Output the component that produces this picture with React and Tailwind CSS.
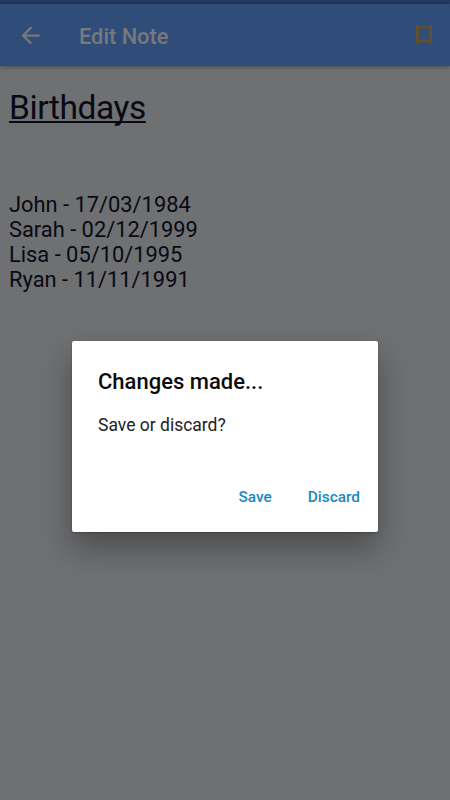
import React from 'react';
import { MdArrowBack } from 'react-icons/md';

const note = {
  title: 'Birthdays',
  lines: ['John - 17/03/1984', 'Sarah - 02/12/1999', 'Lisa - 05/10/1995', 'Ryan - 11/11/1991'],
};

function BookmarkIcon() {
  return (
    <svg viewBox="0 0 18 21" className="w-[18px] h-[21px] text-[#614f33]" fill="none" stroke="currentColor" strokeWidth="3">
      <path d="M2.5 2h13v15.4L9 15l-6.5 2.4z" />
    </svg>
  );
}

// Toolbar, shown in its dimmed state while the dialog is open
function Toolbar() {
  return (
    <header className="flex items-center h-[62px] bg-[#2f4d78] shadow-[0_1px_4px_rgba(0,0,0,0.35)]">
      <button className="ml-[17px] text-[#77797b]">
        <MdArrowBack className="w-[27px] h-[27px]" />
      </button>
      <h1 className="ml-[35px] pt-[3px] text-[21.8px] font-medium leading-none text-[#77797b]">Edit Note</h1>
      <button className="ml-auto mr-[17px]">
        <BookmarkIcon />
      </button>
    </header>
  );
}

function ConfirmDialog() {
  return (
    <div className="absolute inset-0 flex items-center justify-center pt-[73px]">
      <div
        role="dialog"
        className="flex flex-col w-[306px] h-[191px] rounded-[2px] bg-white shadow-[0_16px_32px_rgba(0,0,0,0.32),0_1px_2px_rgba(0,0,0,0.25)]"
      >
        <h2 className="mt-[28px] ml-[26px] text-[22px] leading-[26px] font-medium text-[#0c0c0c]">Changes made...</h2>
        <p className="mt-[19px] ml-[26px] text-[17.5px] leading-[22px] text-[#222222]">Save or discard?</p>
        <div className="flex justify-end gap-9 mt-auto mb-[25px] mr-[18px] text-[15.4px] leading-[20px] font-medium text-[#1b88c4]">
          <button>Save</button>
          <button>Discard</button>
        </div>
      </div>
    </div>
  );
}

export default function App() {
  return (
    <div className="relative flex flex-col w-full h-screen overflow-hidden bg-[#6f7072] font-['Roboto',sans-serif]">
      <div className="h-1 flex-shrink-0 bg-[#233b60]" />
      <Toolbar />
      <main className="px-[9px] text-[#080913]">
        <h2 className="mt-[22px] text-[33.5px] leading-[40px] tracking-[-0.42px] underline decoration-[1.5px] underline-offset-[2px] [text-decoration-skip-ink:none]">
          {note.title}
        </h2>
        <div className="mt-[63.5px] text-[21.85px] leading-[25.2px]">
          {note.lines.map((line) => (
            <p key={line}>{line}</p>
          ))}
        </div>
      </main>
      <ConfirmDialog />
    </div>
  );
}
